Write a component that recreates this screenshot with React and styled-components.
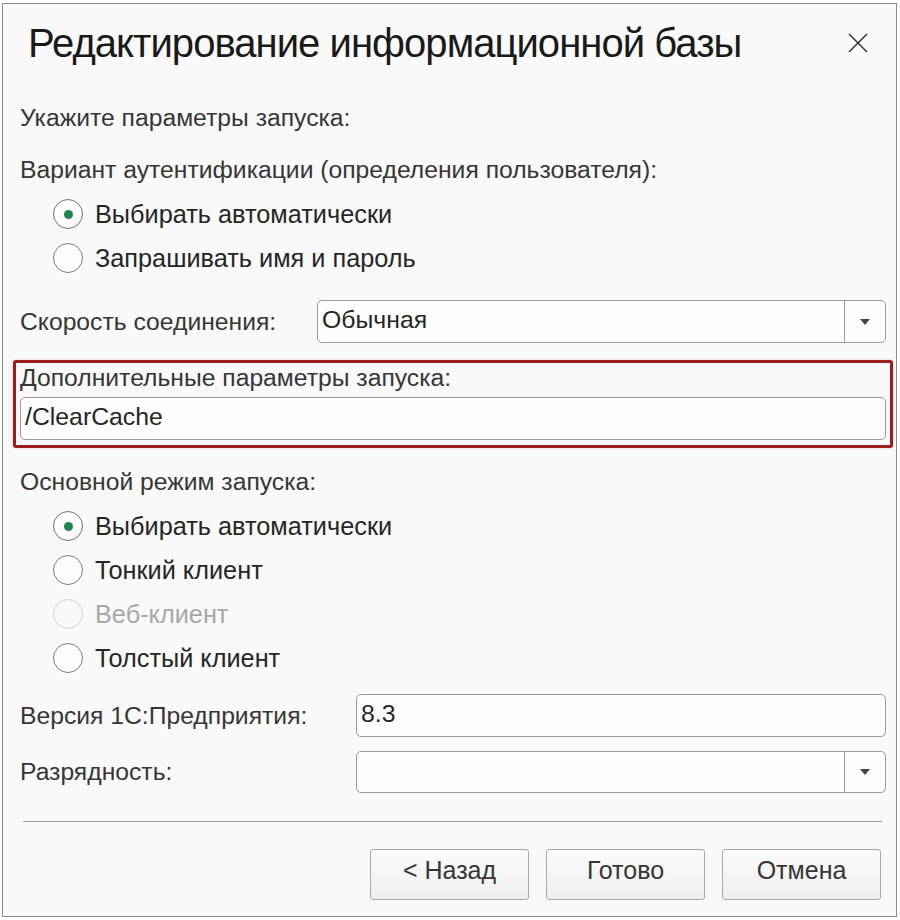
import React from "react";
import styled, { createGlobalStyle } from "styled-components";

const Global = createGlobalStyle`
  html, body { margin: 0; padding: 0; background: #ffffff; }
  body { font-family: "Liberation Sans", Arial, sans-serif; color: #2b2b2b; }
  * { box-sizing: border-box; }
`;

const Window = styled.div`
  margin: 3px 0 0 2px;
  width: 895px;
  height: 914px;
  border: 1px solid #8c8c8c;
  background: #f9f9f9;
  display: flex;
  flex-direction: column;
`;

const Header = styled.div`
  height: 78px;
  display: flex;
  align-items: center;
  justify-content: space-between;
  padding: 0 27px 0 25px;
`;

const Title = styled.h1`
  margin: 0;
  font-weight: 400;
  font-size: 40px;
  letter-spacing: -0.95px;
  color: #1a1a1a;
  line-height: 1;
`;

const Close = styled.button`
  border: 0;
  background: transparent;
  padding: 0;
  width: 22px;
  height: 22px;
  display: flex;
  align-items: center;
  justify-content: center;
  cursor: pointer;
`;

const Body = styled.div`
  padding: 20px 10px 0 17px;
  display: flex;
  flex-direction: column;
`;

const Label = styled.div`
  height: 32px;
  margin-top: ${(p) => p.$mt || 0}px;
  display: flex;
  align-items: center;
  padding-bottom: 1px;
  font-size: 24.7px;
  color: #363636;
  white-space: nowrap;
`;

const RadioGroup = styled.div`
  margin-top: 6px;
  display: flex;
  flex-direction: column;
`;

const RadioRow = styled.label`
  height: 44px;
  display: flex;
  align-items: center;
  gap: 12px;
  padding-left: 33px;
  font-size: 25.3px;
  color: ${(p) => (p.$disabled ? "#a8a8a8" : "#262626")};
`;

const Circle = styled.span`
  width: 30px;
  height: 30px;
  border-radius: 50%;
  border: 1px solid ${(p) => (p.$disabled ? "#d0d0d0" : p.$checked ? "#6f6f6f" : "#7a7a7a")};
  background: ${(p) => (p.$disabled ? "#f9f9f9" : "#fdfdfd")};
  display: flex;
  align-items: center;
  justify-content: center;
  flex: none;
  &::after {
    content: "";
    display: ${(p) => (p.$checked ? "block" : "none")};
    width: 9px;
    height: 9px;
    border-radius: 50%;
    background: #1b8a4c;
  }
`;

const FieldRow = styled.div`
  margin-top: ${(p) => p.$mt || 0}px;
  display: grid;
  grid-template-columns: ${(p) => p.$labelW}px 1fr;
  align-items: center;
`;

const FieldLabel = styled.div`
  font-size: 24.7px;
  color: #363636;
  white-space: nowrap;
`;

const Box = styled.div`
  height: ${(p) => p.$h || 43}px;
  border: 1px solid #9a9a9a;
  border-radius: 5px;
  background: #fdfdfd;
  display: flex;
  align-items: stretch;
  overflow: hidden;
`;

const BoxText = styled.div`
  flex: 1;
  display: flex;
  align-items: center;
  padding: 0 0 3px 4px;
  font-size: 24.8px;
  color: #262626;
`;

const DropBtn = styled.div`
  width: 41px;
  border-left: 1px solid #9a9a9a;
  display: flex;
  align-items: center;
  justify-content: center;
`;

const Arrow = styled.span`
  width: 0;
  height: 0;
  border-left: 5px solid transparent;
  border-right: 5px solid transparent;
  border-top: 6px solid #444;
`;

const Highlight = styled.div`
  margin: 17px -7px 0 -7px;
  height: 88px;
  border: 3px solid #9e1b20;
  border-radius: 3px;
  box-shadow: 0 0 2px rgba(158, 27, 32, 0.35);
  padding: 0 4px;
  display: flex;
  flex-direction: column;
`;

const HLabel = styled.div`
  height: 30px;
  display: flex;
  align-items: center;
  font-size: 24.7px;
  color: #363636;
`;

const HInput = styled(Box)`
  margin-top: 4px;
`;

const Separator = styled.div`
  margin: 28px 4px 0 3px;
  height: 1px;
  background: #9a9a9a;
`;

const Buttons = styled.div`
  margin-top: 27px;
  display: flex;
  justify-content: flex-end;
  gap: 17px;
  padding-right: 5px;
`;

const Button = styled.button`
  width: 159px;
  height: 51px;
  padding: 0 0 8px;
  border: 1px solid #a8a8a8;
  border-radius: 3px;
  background: linear-gradient(#fbfbfb, #efefef);
  font-family: "Liberation Sans", Arial, sans-serif;
  font-size: 25px;
  color: #363636;
  cursor: pointer;
`;

function Radio({ label, checked, disabled }) {
  return (
    <RadioRow $disabled={disabled}>
      <Circle $checked={checked} $disabled={disabled} />
      {label}
    </RadioRow>
  );
}

function Select({ value, h }) {
  return (
    <Box $h={h}>
      <BoxText>{value}</BoxText>
      <DropBtn>
        <Arrow />
      </DropBtn>
    </Box>
  );
}

export default function App() {
  return (
    <>
      <Global />
      <Window>
        <Header>
          <Title>Редактирование информационной базы</Title>
          <Close aria-label="Закрыть">
            <svg width="20" height="20" viewBox="0 0 20 20">
              <path d="M1 1 L19 19 M19 1 L1 19" stroke="#333" strokeWidth="1.5" fill="none" />
            </svg>
          </Close>
        </Header>
        <Body>
          <Label>Укажите параметры запуска:</Label>
          <Label $mt={20}>Вариант аутентификации (определения пользователя):</Label>
          <RadioGroup>
            <Radio label="Выбирать автоматически" checked />
            <Radio label="Запрашивать имя и пароль" />
          </RadioGroup>
          <FieldRow $mt={20} $labelW={297}>
            <FieldLabel>Скорость соединения:</FieldLabel>
            <Select value="Обычная" />
          </FieldRow>
          <Highlight>
            <HLabel>Дополнительные параметры запуска:</HLabel>
            <HInput>
              <BoxText>/ClearCache</BoxText>
            </HInput>
          </Highlight>
          <Label $mt={18}>Основной режим запуска:</Label>
          <RadioGroup>
            <Radio label="Выбирать автоматически" checked />
            <Radio label="Тонкий клиент" />
            <Radio label="Веб-клиент" disabled />
            <Radio label="Толстый клиент" />
          </RadioGroup>
          <FieldRow $mt={14} $labelW={336}>
            <FieldLabel>Версия 1С:Предприятия:</FieldLabel>
            <Box>
              <BoxText>8.3</BoxText>
            </Box>
          </FieldRow>
          <FieldRow $mt={14} $labelW={336}>
            <FieldLabel>Разрядность:</FieldLabel>
            <Select value="" h={42} />
          </FieldRow>
          <Separator />
          <Buttons>
            <Button>&lt; Назад</Button>
            <Button>Готово</Button>
            <Button>Отмена</Button>
          </Buttons>
        </Body>
      </Window>
    </>
  );
}
